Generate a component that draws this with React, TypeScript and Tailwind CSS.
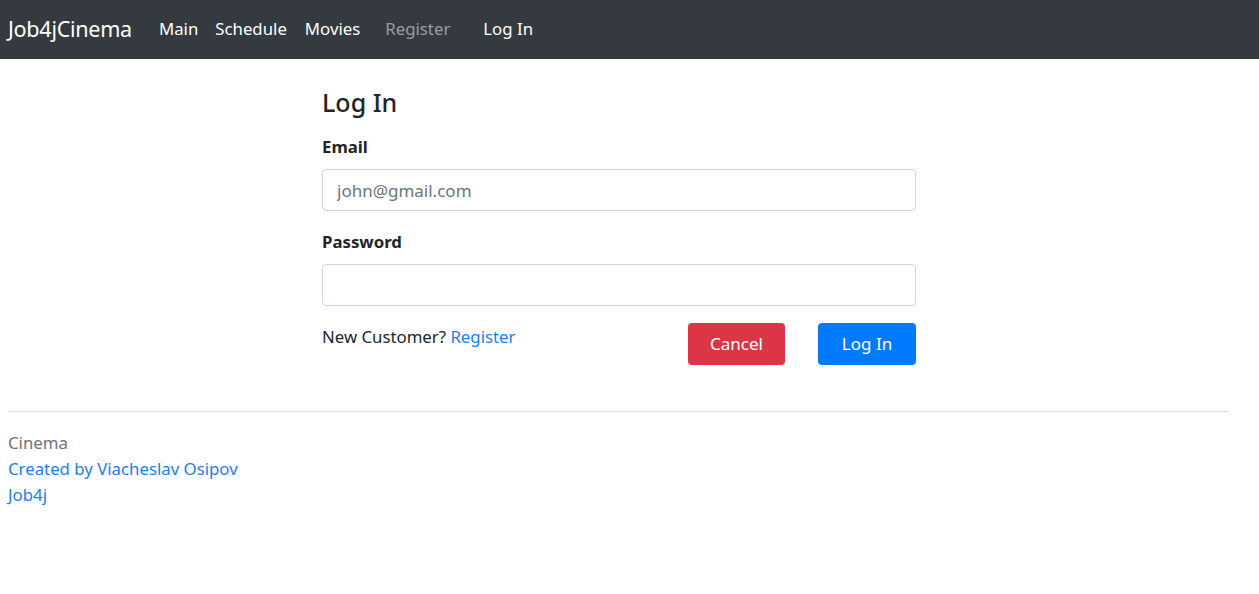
import { useState } from 'react'

const NavItem = ({ label, muted, className }: { label: string; muted?: boolean; className?: string }) => (
  <a
    href="#"
    className={`text-[16.8px] leading-[26px] ${muted ? 'text-white/50' : 'text-white'} ${className ?? ''}`}
  >
    {label}
  </a>
)

const App = () => {
  const [email, setEmail] = useState('')
  const [password, setPassword] = useState('')

  return (
    <div className="min-h-[594px] bg-white text-[#212529] font-['Noto_Sans','Open_Sans',sans-serif] text-[16.8px]">
      <nav className="h-[59px] bg-[#343a40] flex items-center px-2 pb-[2px]">
        <a href="#" className="text-white text-[21.6px] leading-[30px] tracking-[-0.3px]">
          Job4jCinema
        </a>
        <div className="flex items-center">
          <NavItem label="Main" className="ml-[27px]" />
          <NavItem label="Schedule" className="ml-[17px]" />
          <NavItem label="Movies" className="ml-[18px]" />
          <NavItem label="Register" muted className="ml-[25px]" />
          <NavItem label="Log In" className="ml-[33px]" />
        </div>
      </nav>

      <main className="ml-[322px] w-[594px] pt-[26px]">
        <h3 className="text-[25px] leading-[34px] font-medium">Log In</h3>

        <form onSubmit={(e) => e.preventDefault()}>
          <label className="block mt-[15px] font-bold leading-[26px]">Email</label>
          <input
            type="email"
            value={email}
            onChange={(e) => setEmail(e.target.value)}
            placeholder="john@gmail.com"
            className="block mt-[9px] w-full h-[42px] px-[14px] border border-[#ced4da] rounded-[4px] text-[17px] placeholder:text-[#6c757d] outline-none"
          />

          <label className="block mt-[18px] font-bold leading-[26px]">Password</label>
          <input
            type="password"
            value={password}
            onChange={(e) => setPassword(e.target.value)}
            className="block mt-[9px] w-full h-[42px] px-[14px] border border-[#ced4da] rounded-[4px] text-[17px] outline-none"
          />

          <div className="mt-[17px] flex items-start">
            <p className="mt-px leading-[26px]">
              New Customer? <a href="#" className="text-[#1a7ff0]">Register</a>
            </p>
            <div className="ml-auto flex gap-[33px]">
              <button
                type="button"
                className="w-[97px] h-[42px] rounded-[4px] bg-[#dc3545] text-white text-[17px]"
              >
                Cancel
              </button>
              <button
                type="submit"
                className="w-[98px] h-[42px] rounded-[4px] bg-[#007bff] text-white text-[17px]"
              >
                Log In
              </button>
            </div>
          </div>
        </form>
      </main>

      <hr className="mt-[46px] mx-2 w-[1221px] border-t border-[#e2e2e2]" />

      <footer className="px-2 pt-[18px] leading-[26px]">
        <div className="text-[#6c757d]">Cinema</div>
        <a href="#" className="block text-[#1a7ff0]">Created by Viacheslav Osipov</a>
        <a href="#" className="block text-[#1a7ff0]">Job4j</a>
      </footer>
    </div>
  )
}

export default App
